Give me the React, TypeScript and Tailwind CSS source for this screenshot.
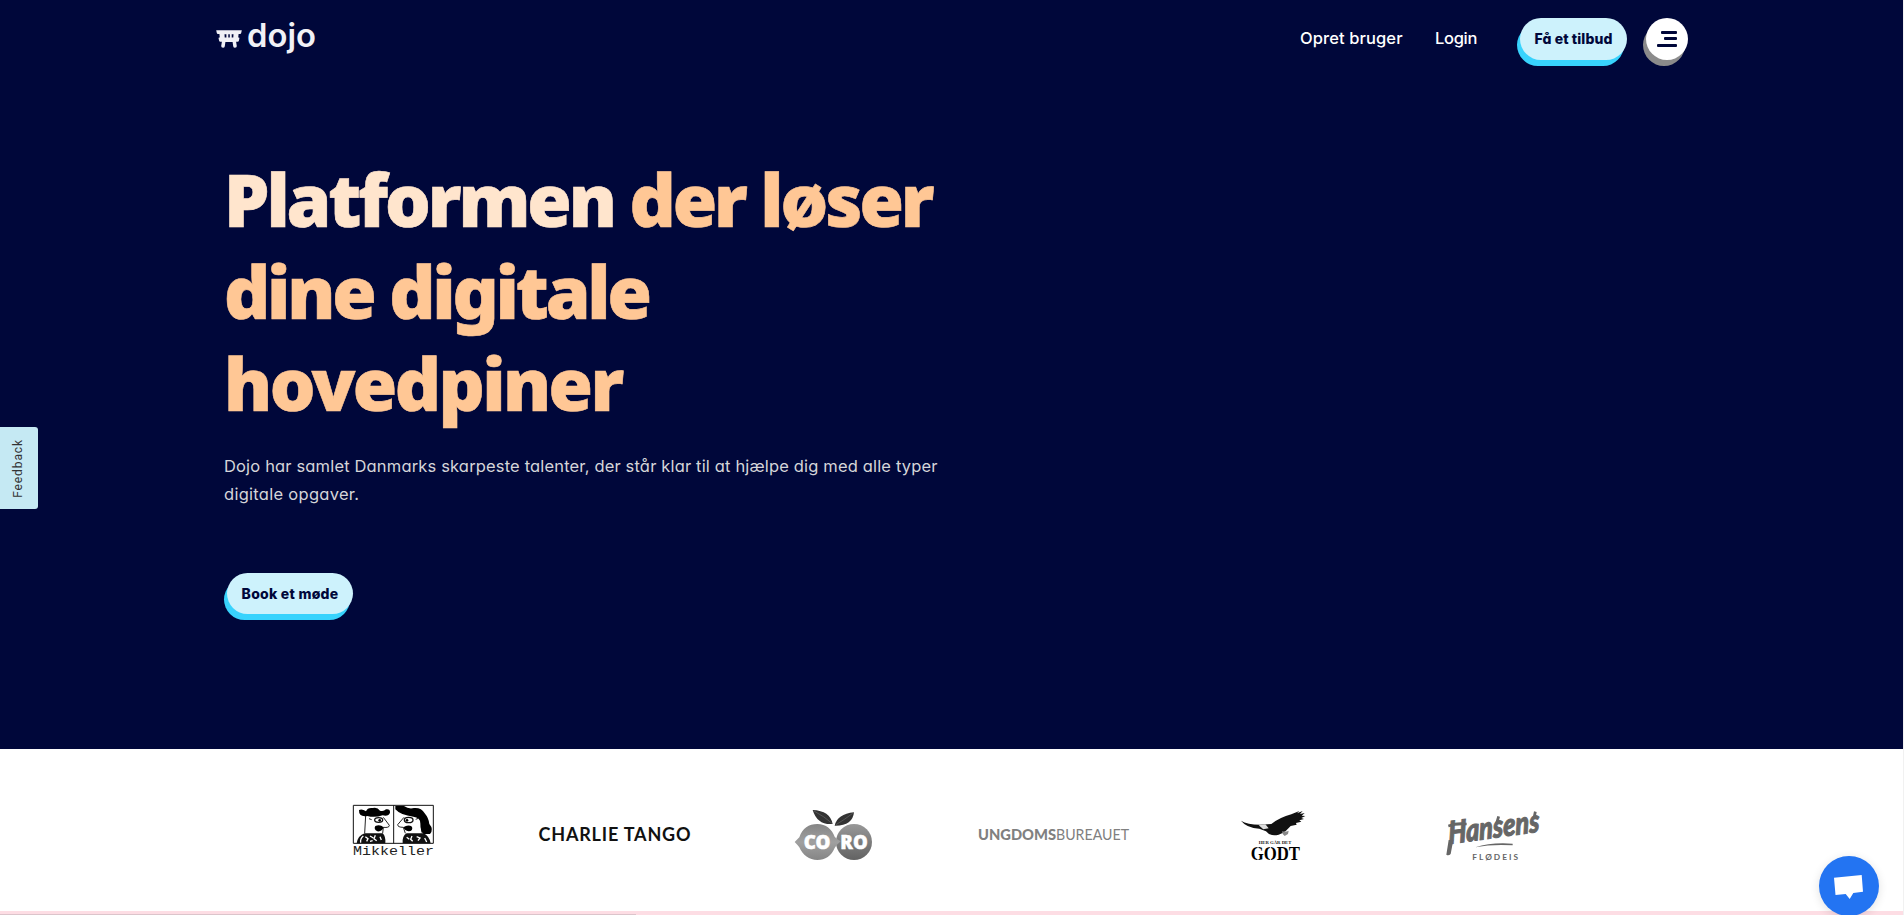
import React from "react";

const GEO = "font-['Inter','Open_Sans',sans-serif] [font-feature-settings:'cv11'_1,'cv05'_0]";

function DojoLogo() {
  return (
    <svg className="block h-10 w-[110px] overflow-visible" viewBox="0 0 110 40" role="img" aria-label="dojo">
      <path
        fill="#f1f1f6"
        fillRule="evenodd"
        d="M.2 14.200H25.800L25.200 16.900Q25 17.900 24 17.900H22.600L22.200 21.600H22.800Q23.600 21.600 23.400 22.400L22.800 25Q22.600 25.800 21.800 25.800H20.100L20.800 30Q20.900 31.800 19 31.800Q17.500 31.800 17.200 30.300L16.600 26H9.400L8.800 30.300Q8.500 31.800 7 31.800Q5.100 31.800 5.200 30L5.900 25.800H4.200Q3.400 25.800 3.200 25L2.600 22.400Q2.400 21.600 3.200 21.600H3.800L3.400 17.900H2Q1 17.900.8 16.900zM8.500 18.200L8.700 21.600H10.400V18.200zM12.300 18.200V21.600H13.800V18.200zM15.700 18.200V21.600H17.300L17.500 18.200z"
      />
      <text x="31" y="30.500" fill="#f1f1f6" fontSize="32.500" fontWeight="600" textLength="69" lengthAdjust="spacingAndGlyphs" className={GEO}>dojo</text>
    </svg>
  );
}

function Mikkeller() {
  return (
    <svg className="h-16 w-40 overflow-visible" viewBox="0 0 160 64" role="img" aria-label="Mikkeller">
      <g transform="translate(16 -12) scale(.33333)">
        <path d="M70 46H310V160H70zM191 46V160" fill="none" stroke="#111" strokeWidth="3" />
        <path d="M107 76L104 130M160 82L178 106Q178 114 160 112L158 130M222 82L203 104Q203 112 220 112L226 130M270 76L276 128" fill="none" stroke="#222" strokeWidth="3" />
        <path d="M87 60Q97 56 108 64Q112 52 128 54Q142 50 150 62Q160 66 168 58Q181 56 180 68Q176 80 158 76Q134 84 112 78Q86 82 87 60z" />
        <path d="M196 48H222Q236 58 252 54Q274 52 284 70Q296 84 298 102Q312 118 300 132H280Q270 122 272 100Q270 82 250 80Q212 76 196 58z" />
        <ellipse cx="146" cy="90" rx="12" ry="7" fill="#fff" stroke="#111" strokeWidth="4" />
        <ellipse cx="236" cy="90" rx="13" ry="8" fill="#fff" stroke="#111" strokeWidth="4" />
        <circle cx="149" cy="91" r="4" /><circle cx="231" cy="91" r="4" />
        <path d="M117 86l8 3M257 88l8-3" stroke="#222" strokeWidth="3" />
        <path d="M136 108Q150 102 161 112Q156 126 142 124Q130 118 136 108zM220 112Q234 102 246 110Q250 122 236 124Q224 122 220 112z" />
        <path d="M80 160Q84 136 104 130H158Q168 140 166 160zM218 160Q216 138 230 130H280Q298 138 302 160z" fill="#111" />
        <path d="M92 158Q90 146 100 138M106 140l8 6-4 8M120 138l10 6M136 136l-4 10 8 6M150 140l4 10M120 154l8-2M230 142l8 6M246 138l-4 10 6 6M260 140l10 4-6 8M284 144l6 12" fill="none" stroke="#fff" strokeWidth="4" />
        <text x="69" y="194" fontSize="38" fill="#222" textLength="243" lengthAdjust="spacingAndGlyphs" className="font-['Liberation_Mono',monospace]">Mikkeller</text>
      </g>
    </svg>
  );
}

function CharlieTango() {
  return (
    <svg className="h-16 w-40 overflow-visible" viewBox="0 0 160 64" role="img" aria-label="Charlie Tango">
      <text x="4.500" y="39" fontSize="18" fontWeight="700" fill="#111" textLength="152" lengthAdjust="spacing" className="font-['Lato',sans-serif]">CHARLIE TANGO</text>
    </svg>
  );
}

function Coro() {
  return (
    <svg className="h-16 w-40 overflow-visible" viewBox="0 0 160 64" role="img" aria-label="Coro">
      <defs>
        <linearGradient id="lemon" x1="0" y1="0" x2="0" y2="1"><stop offset="0" stopColor="#858585" /><stop offset=".5" stopColor="#a0a0a0" /><stop offset="1" stopColor="#858585" /></linearGradient>
        <linearGradient id="orange" x1="0" y1="0" x2="0" y2="1"><stop offset="0" stopColor="#989898" /><stop offset="1" stopColor="#626262" /></linearGradient>
      </defs>
      <g transform="translate(-234 -2) scale(.33333)">
        <circle cx="1002" cy="126" r="54" fill="url(#orange)" />
        <path d="M824 126Q832 118 838 112C848 84 866 72 892 72S936 88 944 110Q950 118 962 124Q950 134 944 144C934 168 916 180 892 180S848 166 838 142Q832 134 824 126z" fill="url(#lemon)" />
        <path d="M878 30Q930 32 938 72Q892 76 878 30zM1002 37Q998 78 944 77Q952 42 1002 37z" fill="#333" />
        <path d="M882 33Q914 50 936 70M998 40Q972 60 948 74" fill="none" stroke="#666" strokeWidth="2" />
        <text x="851" y="147" fontSize="58" fontWeight="900" fill="#fff" stroke="#fff" strokeWidth="1.500" textLength="80" lengthAdjust="spacingAndGlyphs" className="font-['Noto_Sans',sans-serif]">CO</text>
        <text x="961" y="147" fontSize="58" fontWeight="900" fill="#fff" stroke="#fff" strokeWidth="1.500" textLength="82" lengthAdjust="spacingAndGlyphs" className="font-['Noto_Sans',sans-serif]">RO</text>
      </g>
    </svg>
  );
}

function Ungdomsbureauet() {
  return (
    <svg className="h-16 w-40 overflow-visible" viewBox="0 0 160 64" role="img" aria-label="Ungdomsbureauet">
      <text x="4" y="38" fontSize="15.500" fontWeight="900" fill="#808080" textLength="78" lengthAdjust="spacingAndGlyphs" className="font-['Lato',sans-serif]">UNGDOMS</text>
      <text x="82" y="38" fontSize="15.500" fontWeight="400" fill="#808080" textLength="73" lengthAdjust="spacingAndGlyphs" className="font-['Lato',sans-serif]">BUREAUET</text>
    </svg>
  );
}

function Godt() {
  return (
    <svg className="h-16 w-40 overflow-visible" viewBox="0 0 160 64" role="img" aria-label="Her går det godt">
      <g transform="translate(-234 -2) scale(.33333)">
        <path d="M843 62Q862 74 900 74L934 72Q960 52 994 43L1018 33 1011 40 1028 33 1020 42 1034 39 1025 47 1036 48 1024 54 1032 57 1018 61 1024 65 1008 69 1010 74 992 78 978 92Q968 100 956 104Q930 110 918 94L898 86Q860 84 843 62z" fill="#111" />
        <path d="M966 94Q978 96 986 92L984 102 974 108 968 102z" fill="#888" />
        <path d="M896 76l20-3 10 12-16 3z" fill="#ddd" />
        <text x="896" y="133" fontSize="14" fontWeight="700" fill="#222" textLength="98" lengthAdjust="spacingAndGlyphs" className="font-['Liberation_Serif',serif]">HER GÅR DET</text>
        <text x="872" y="180" fontSize="58" fontWeight="700" fill="#000" textLength="148" lengthAdjust="spacingAndGlyphs" className="font-['Liberation_Serif',serif]">GODT</text>
        <path d="M894 138v46M931 138v46" stroke="#fff" strokeWidth="3" />
      </g>
    </svg>
  );
}

function Hansens() {
  return (
    <svg className="h-16 w-40 overflow-visible" viewBox="0 0 160 64" role="img" aria-label="Hansens Flødeis">
      <g transform="translate(6 -12) scale(.33333)" fill="#666">
        <g transform="translate(86 163) rotate(-8) skewX(-6)">
          <text x="0" y="0" fontSize="94" fontWeight="900" fontStyle="italic" stroke="#666" strokeWidth="3" textLength="276" lengthAdjust="spacingAndGlyphs" className="font-['Lato',sans-serif]">Hansens</text>
        </g>
        <path d="M100 150L92 192Q86 198 79 194L86 150zM84 104Q108 94 140 98V106Q108 104 86 112zM166 172Q214 156 278 161V166Q216 162 166 172zM226 98l6-20 8 2-6 22zM338 84l4-20 8 2-4 22z" />
        <text x="157" y="209" fontSize="25" fontWeight="700" textLength="137" lengthAdjust="spacing" className="font-['Lato',sans-serif]">FLØDEIS</text>
      </g>
    </svg>
  );
}

function Header() {
  return (
    <header className="flex h-[78px] items-start pl-[216px] pr-[215px]">
      <a href="#" className="mt-4"><DojoLogo /></a>
      <nav className={`${GEO} ml-auto flex items-start text-white`}>
        <a href="#" className="mt-[26px] mr-[31px] w-[104px] whitespace-nowrap text-[16.5px] leading-6 font-medium tracking-[0.1px]">Opret bruger</a>
        <a href="#" className="mt-[26px] mr-[42px] w-[43px] whitespace-nowrap text-[16.5px] leading-6 font-medium tracking-[-0.3px]">Login</a>
        <button className="mt-[18px] mr-[19px] h-[42px] w-[107px] rounded-full bg-[#cdf2fc] text-sm font-extrabold whitespace-nowrap text-[#00073a] tracking-[0.1px] shadow-[-3px_6px_0_#38d3fd]">Få et tilbud</button>
        <button aria-label="Menu" className="mt-[18px] flex h-[42px] w-[42px] flex-col items-end justify-center gap-[3.5px] rounded-full bg-white pr-[11px] pb-[1px] shadow-[-3px_6px_0_#8b8b8b]">
          <span className="h-[3px] w-4 rounded-[1px] bg-[#00073a]" />
          <span className="h-[3px] w-[13px] rounded-[1px] bg-[#00073a]" />
          <span className="h-[3px] w-5 rounded-[1px] bg-[#00073a]" />
        </button>
      </nav>
    </header>
  );
}

export default function App() {
  return (
    <div className="relative flex h-[915px] w-full overflow-hidden bg-white">
      <div className="flex min-w-0 flex-1 flex-col">
        <div className="h-[749px] bg-[#00073a]">
          <Header />
          <main className="pt-[75px] pl-[224px]">
            <h1 className="font-['Noto_Sans','Open_Sans',sans-serif] text-[72px] leading-[92px] font-black whitespace-nowrap text-[#ffc795] [-webkit-text-stroke:0.6px_currentColor]">
              <span className="block tracking-[-3.100px]"><span className="text-[#ffe5cd]">Platformen</span> <span>der løser</span></span>
              <span className="block tracking-[-3.200px]">dine digitale</span>
              <span className="block tracking-[-2.600px]">hovedpiner</span>
            </h1>
            <p className={`${GEO} mt-[23px] text-[16.5px] leading-7 whitespace-nowrap text-[#d5d5d9]`}>
              <span className="block tracking-[0.16px]">Dojo har samlet Danmarks skarpeste talenter, der står klar til at hjælpe dig med alle typer</span>
              <span className="block tracking-[0.28px]">digitale opgaver.</span>
            </p>
            <button className={`${GEO} mt-[65px] ml-[3px] h-[41px] w-[126px] rounded-full bg-[#cdf2fc] text-sm font-extrabold whitespace-nowrap text-[#00073a] tracking-[0.25px] shadow-[-3px_6px_0_#38d3fd]`}>Book et møde</button>
          </main>
        </div>
        <section className="grid h-[162px] grid-cols-[repeat(6,220px)] place-items-center pt-2 pl-[284px]">
          <Mikkeller />
          <CharlieTango />
          <Coro />
          <Ungdomsbureauet />
          <Godt />
          <Hansens />
        </section>
        <div className="flex h-1 items-end bg-[#fddde4]">
          <div className="h-px w-[636px] bg-[#dcc4cb]" />
        </div>
      </div>
      <div className="w-px bg-[#f1f1f1]" />
      <button className="absolute top-[427px] left-0 flex h-[82px] w-[38px] items-center justify-center rounded-r-[3px] bg-[#c5e9f3] pr-[3px]">
        <span className="rotate-180 font-['Roboto',sans-serif] text-xs tracking-[0.9px] text-[#333] [writing-mode:vertical-rl]">Feedback</span>
      </button>
      <button aria-label="Chat" className="absolute top-[856px] left-[1819px] h-[60px] w-[60px] rounded-full bg-[#2374f2] shadow-[0_2px_10px_rgba(0,0,0,0.12)]">
        <svg className="h-[60px] w-[60px]" viewBox="0 0 60 60">
          <path d="M15 21.800L42.700 19 44 35.700 34.300 37 30.700 43 26.700 38 16.500 39z" fill="#fff" />
        </svg>
      </button>
    </div>
  );
}
